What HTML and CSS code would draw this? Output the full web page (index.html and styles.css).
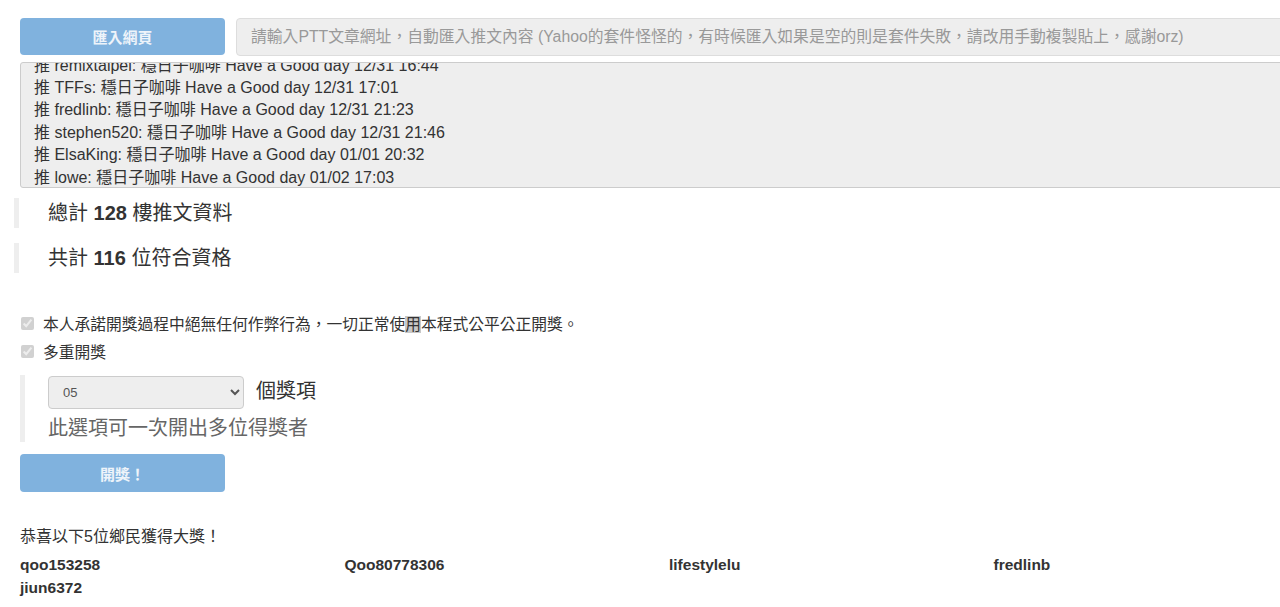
FILE: index.html
```html
<!DOCTYPE html>
<html lang="zh-Hant">
<head>
    <meta charset="UTF-8">
    <meta name="viewport" content="width=device-width, initial-scale=1.0">
    <title>PTT 推文抽獎</title>
    <link rel="stylesheet" href="styles.css">
</head>
<body>
    <div class="page">
        <div class="import-row">
            <button class="btn import-btn" type="button">匯入網頁</button>
            <input class="url-input" type="text" placeholder="請輸入PTT文章網址，自動匯入推文內容 (Yahoo的套件怪怪的，有時候匯入如果是空的則是套件失敗，請改用手動複製貼上，感謝orz)">
        </div>

        <div class="push-list">
            <div class="push-line">推 jerry0802: 穩日子咖啡 Have a Good day 12/31 15:20</div>
            <div class="push-line">推 remixtaipei: 穩日子咖啡 Have a Good day 12/31 16:44</div>
            <div class="push-line">推 TFFs: 穩日子咖啡 Have a Good day 12/31 17:01</div>
            <div class="push-line">推 fredlinb: 穩日子咖啡 Have a Good day 12/31 21:23</div>
            <div class="push-line">推 stephen520: 穩日子咖啡 Have a Good day 12/31 21:46</div>
            <div class="push-line">推 ElsaKing: 穩日子咖啡 Have a Good day 01/01 20:32</div>
            <div class="push-line">推 lowe: 穩日子咖啡 Have a Good day 01/02 17:03</div>
        </div>

        <blockquote class="stat">總計 <b>128</b> 樓推文資料</blockquote>
        <blockquote class="stat">共計 <b>116</b> 位符合資格</blockquote>

        <div class="check-group">
            <label class="check-row">
                <input type="checkbox" checked disabled>
                <span>本人承諾開獎過程中絕無任何作弊行為，一切正常使<span class="mark">用</span>本程式公平公正開獎。</span>
            </label>
            <label class="check-row">
                <input type="checkbox" checked disabled>
                <span>多重開獎</span>
            </label>
        </div>

        <div class="multi-box">
            <div class="multi-pick">
                <select class="count-select">
                    <option>01</option>
                    <option>02</option>
                    <option>03</option>
                    <option>04</option>
                    <option selected>05</option>
                </select>
                <span class="multi-label">個獎項</span>
            </div>
            <p class="multi-hint">此選項可一次開出多位得獎者</p>
        </div>

        <button class="btn draw-btn" type="button">開獎！</button>

        <p class="congrats">恭喜以下5位鄉民獲得大獎！</p>
        <div class="winners">
            <div class="winner">qoo153258</div>
            <div class="winner">Qoo80778306</div>
            <div class="winner">lifestylelu</div>
            <div class="winner">fredlinb</div>
            <div class="winner">jiun6372</div>
        </div>
    </div>
</body>
</html>
```

FILE: styles.css
```css
* {
    box-sizing: border-box;
    margin: 0;
    padding: 0;
}

body {
    font-family: 'Liberation Sans', 'Noto Sans CJK TC', sans-serif;
    font-size: 16px;
    color: #333;
    background: #fff;
    overflow: hidden;
}

.page {
    width: 1318px;
    padding: 18px 0 0 20px;
}

.btn {
    display: block;
    width: 205px;
    border: none;
    border-radius: 4px;
    background: #80b2de;
    color: #eef4fa;
    font-family: inherit;
    font-size: 15px;
    font-weight: bold;
}

/* import */
.import-row {
    display: flex;
    gap: 11px;
    height: 38px;
}

.import-btn {
    height: 37px;
}

.url-input {
    flex: 1;
    height: 38px;
    padding: 0 14px;
    background: #eee;
    border: 1px solid #ddd;
    border-radius: 4px;
    font-family: inherit;
    font-size: 15.8px;
}

.url-input::placeholder {
    color: #999;
}

.push-list {
    display: flex;
    flex-direction: column;
    justify-content: flex-end;
    height: 126px;
    margin-top: 6px;
    padding: 0 13px;
    background: #eee;
    border: 1px solid #ccc;
    border-radius: 3px;
    overflow: hidden;
}

.push-line {
    flex-shrink: 0;
    line-height: 22.4px;
    white-space: nowrap;
}

.push-line:last-child {
    margin-bottom: -2px;
}

/* stats */
.stat {
    margin: 10px 0 15px -6px;
    padding-left: 29px;
    border-left: 5px solid #eee;
    font-size: 20px;
    line-height: 30px;
}

.stat + .stat {
    margin-top: 0;
}

/* checkboxes */
.check-group {
    margin-top: 36px;
}

.check-row {
    display: flex;
    align-items: center;
    height: 28px;
    font-size: 15.75px;
}

.check-row input {
    width: 13px;
    height: 13px;
    margin: 0 9px 0 1px;
}

.mark {
    background: #c8c8c8;
}

/* multi draw */
.multi-box {
    margin-top: 10px;
    padding-left: 23px;
    border-left: 5px solid #eee;
}

.multi-pick {
    display: flex;
    align-items: center;
    gap: 12px;
}

.count-select {
    width: 196px;
    height: 33px;
    padding: 0 10px;
    background-color: #eee;
    border: 1px solid #ccc;
    border-radius: 4px;
    color: #555;
    font-family: inherit;
    font-size: 13px;
}

.multi-label {
    margin-bottom: 5px;
    font-size: 20px;
}

.multi-hint {
    margin-top: 5px;
    color: #666;
    font-size: 20px;
    line-height: 28px;
}

.draw-btn {
    height: 38px;
    margin-top: 12px;
}

/* result */
.congrats {
    margin-top: 35px;
    line-height: 20px;
}

.winners {
    display: grid;
    grid-template-columns: repeat(4, 324.5px);
    margin-top: 6px;
}

.winner {
    font-size: 15.5px;
    font-weight: bold;
    line-height: 23px;
}
```
